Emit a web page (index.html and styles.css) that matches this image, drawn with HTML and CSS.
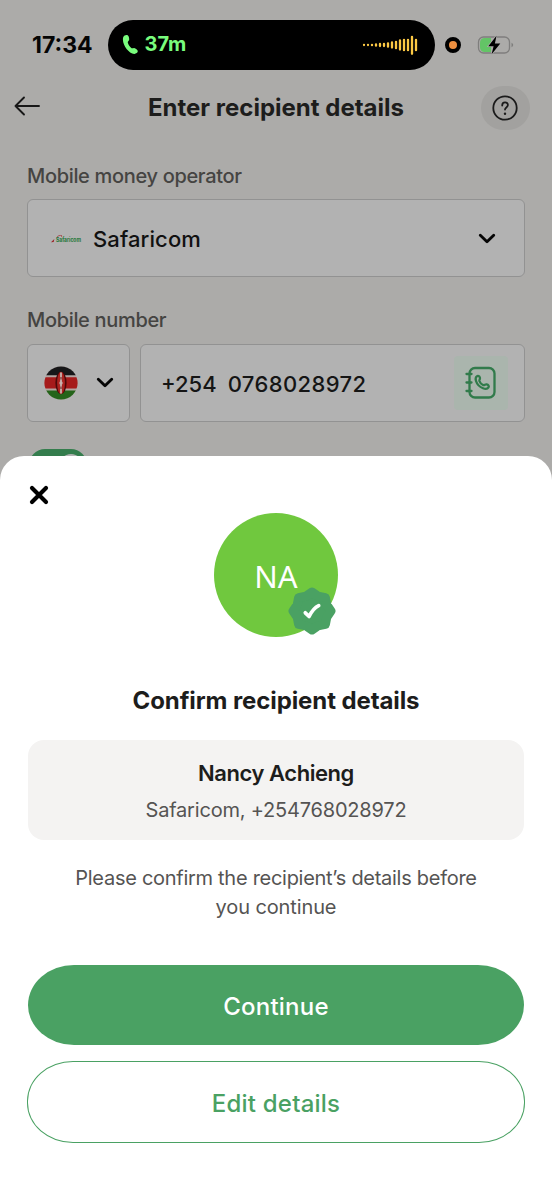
FILE: index.html
```html
<!DOCTYPE html>
<html lang="en">
<head>
<meta charset="utf-8">
<title>Enter recipient details</title>
<link rel="stylesheet" href="styles.css">
</head>
<body>
<div class="screen">
  <div class="status">
    <span class="clock">17:34</span>
    <div class="island">
      <svg class="call" width="17" height="21" viewBox="0 0 17 21"><path d="M1.2 3.2C2 1.300 4.300.4 5.700 1.300c1.300.9 1.800 3.600 1.300 4.900-.4 1-1.400 1.300-1.200 2.400.4 1.900 1.800 4.100 3.500 5.400 1 .7 1.700-.2 2.900-.1 1.400.2 3.600 1.800 3.600 3.200 0 1.700-1.900 2.900-3.600 2.800C6.300 19.400-.6 9.500 1.200 3.200z" fill="#79fc7d"/></svg>
      <span class="duration">37m</span>
      <svg class="wave" width="56" height="20" viewBox="0 0 56 20" stroke="#fbc844" stroke-width="2.300" stroke-linecap="round"><path d="M2 10h.01M6 10h.01M10 9.800v.4M14 9.300v1.400M18 9v2M22 9v2M26 8.300v3.400M30 7.500v5M34 6.800v6.400M38 5.500v9M42 4.800v10.400M46 4.800v10.400M50 1.800v17M54 4.800v10.400"/></svg>
    </div>
    <span class="mic"></span>
    <svg class="battery" width="37" height="20" viewBox="0 0 37 20"><path d="M7.500 3H14v14H7.500A4.500 4.500 0 0 1 3 12.500v-5A4.500 4.500 0 0 1 7.500 3z" fill="#63c466"/><rect x="1.500" y="2" width="31" height="16" rx="5" fill="none" stroke="#7f7e7d" stroke-width="1.300"/><path d="M34.500 7.800c2.200.8 2.200 3.600 0 4.400z" fill="#7f7e7d"/><path d="M19.500.8 11.300 11.300h5.300l-2 8L23.300 8.500h-5.400z" fill="#000" stroke="#acaba9" stroke-width="1.500" paint-order="stroke"/></svg>
  </div>
  <header class="bar">
    <svg class="back" width="26" height="20" viewBox="0 0 26 20"><path d="M25 10H1.500M10 1.500 1.500 10l8.500 8.500" fill="none" stroke="#171717" stroke-width="1.900" stroke-linecap="round" stroke-linejoin="round"/></svg>
    <h1 class="title">Enter recipient details</h1>
    <div class="help"><svg width="26" height="26" viewBox="0 0 26 26" fill="none" stroke="#1b1b1b" stroke-width="1.800" stroke-linecap="round"><circle cx="13" cy="13" r="11.700"/><path d="M10.200 10.500c0-4.200 5.700-4.200 5.700-.4 0 2.300-2.900 2.500-2.900 4.500"/><path d="M13 18.700h.01" stroke-width="2.400"/></svg></div>
  </header>
  <main class="form">
    <div class="label operator-label">Mobile money operator</div>
    <div class="field operator">
      <svg class="logo" width="33" height="16" viewBox="0 -3 33 16"><path d="M1 8.200 4.300 5l-.6 3z" fill="#9c2128"/><path d="M6.500 3.500C8 1.600 9.800 1 12 1.800l-1 .8" fill="none" stroke="#a53b3f" stroke-width=".8"/><text class="logo-text" x="6" y="7.500" textLength="25" lengthAdjust="spacingAndGlyphs">Safaricom</text></svg>
      <span class="operator-name">Safaricom</span>
      <svg class="chevron" width="18" height="12" viewBox="0 0 18 12"><path d="m2.300 2.300 6.700 6.400 6.700-6.400"/></svg>
    </div>
    <div class="label number-label">Mobile number</div>
    <div class="row">
      <div class="field country">
        <svg width="34" height="34" viewBox="0 0 34 34"><defs><clipPath id="disc"><circle cx="17" cy="17" r="16.600"/></clipPath></defs><g clip-path="url(#disc)"><path d="M0 0h34v34H0z" fill="#b3a5a2"/><path d="M0 0h34v9.300H0z" fill="#171719"/><path d="M0 11.200h34v11.400H0z" fill="#a61b1b"/><path d="M0 24.500h34V34H0z" fill="#24641a"/><ellipse cx="17" cy="17" rx="5.600" ry="11.300" fill="#4b0909"/><ellipse cx="17" cy="17" rx="3.900" ry="11.300" fill="#ac2320"/><path d="M17 6.500v21" stroke="#c7b4b0" stroke-width="1.800"/><path d="M17 11v2.500M17 20.500V23" stroke="#76312f" stroke-width="1.200"/><circle cx="17" cy="17" r="1.700" fill="#c7b4b0"/></g></svg>
        <svg class="chevron" width="18" height="12" viewBox="0 0 18 12"><path d="m2.300 2.300 6.700 6.400 6.700-6.400"/></svg>
      </div>
      <div class="field phone">
        <span class="prefix">+254</span><span class="digits">0768028972</span>
        <div class="contacts"><svg width="32" height="34" viewBox="0 0 32 34" fill="none" stroke="#317b4b" stroke-width="2.300" stroke-linecap="round" stroke-linejoin="round"><rect x="4.500" y="2" width="25" height="29.500" rx="5.500"/><path d="M1.500 8h5M1.500 16.500h5M1.500 25h5"/><path d="M11.800 10.300c1.200-.9 2.500-.2 3.100 1.400.5 1.500-.8 2.100-.5 3.300.6 1.900 2 3.400 3.900 4.100 1.200.4 1.900-1 3.300-.7 1.800.4 2.700 1.700 1.900 2.900-1 1.600-3.300 1.800-5.500.9-3.400-1.300-6-4.100-7-7.200-.6-2-.4-3.800.8-4.700z"/></svg></div>
      </div>
    </div>
    <div class="toggle"><span class="knob"></span></div>
  </main>

  <section class="sheet">
    <svg class="close" width="20" height="20" viewBox="0 0 20 20"><path d="m3 3 14 14M17 3 3 17" stroke="#000" stroke-width="4.200" stroke-linecap="round"/></svg>
    <div class="avatar"><span class="initials">NA</span>
      <svg class="verified" width="48" height="48" viewBox="-24 -24 48 48"><path fill="#4aa163" stroke="#4aa163" stroke-width="9" stroke-linejoin="round" d="M0-19 6.100-14.800 13.400-13.400 14.800-6.100 19 0 14.800 6.100 13.400 13.400 6.100 14.800 0 19-6.100 14.800-13.400 13.400-14.800 6.100-19 0-14.800-6.100-13.400-13.400-6.100-14.800z"/><path d="m-6.700 1.800 3.800 3.700C-.9 1.400 2-3.200 6.700-5.400" fill="none" stroke="#fff" stroke-width="3.700" stroke-linecap="round" stroke-linejoin="round"/></svg>
    </div>
    <h2 class="heading">Confirm recipient details</h2>
    <div class="card"><div class="name">Nancy Achieng</div><div class="account">Safaricom, +254768028972</div></div>
    <p class="note"><span class="line-one">Please confirm the recipient’s details before</span><br><span class="line-two">you continue</span></p>
    <button class="button primary"><span>Continue</span></button>
    <button class="button outline"><span>Edit details</span></button>
  </section>
</div>
</body>
</html>
```
FILE: styles.css
```css
* { box-sizing: border-box; }
body { margin: 0; font-family: Inter, "Liberation Sans", sans-serif; }
svg { display: block; flex: none; }
.screen { position: relative; width: 552px; height: 1200px; overflow: hidden; background: #acaba9; }
.screen span, .title, .heading, .label, .name, .account { white-space: nowrap; }

.status { display: flex; align-items: center; height: 89px; padding-left: 32px; }
.clock { width: 76px; font-size: 23px; font-weight: 700; color: #050505; }
.island { display: flex; align-items: center; width: 327px; height: 50px; padding: 0 17px 0 14px; border-radius: 25px; background: #000; }
.duration { margin-left: 5.500px; padding-bottom: 1px; font-size: 20px; font-weight: 700; color: #79fc7d; }
.wave { margin-left: auto; }
.mic { width: 16px; height: 16px; margin-left: 10px; border: 4px solid #000; border-radius: 50%; background: #ee8f40; }
.battery { margin-left: 16px; }

.bar { display: flex; align-items: center; height: 37px; padding: 0 22px 0 14px; }
.back { margin-bottom: 4px; }
.title { flex: 1; margin: 0 0 0 31px; text-align: center; font-size: 24px; line-height: 30px; font-weight: 700; color: #1d1d1c; }
.help { display: flex; align-items: center; justify-content: center; width: 49px; height: 44px; border-radius: 22px; background: #a2a19f; }
.help svg { margin-right: 1px; }

.form { padding: 35px 27px 0; }
.label { font-size: 20px; line-height: 28px; font-weight: 500; letter-spacing: -.33px; color: #454442; }
.field { display: flex; align-items: center; height: 78px; border: 1.500px solid #929292; border-radius: 6px; background: #b2b2b2; }
.operator { margin-top: 10px; padding: 1px 28px 0 22px; }
.operator-label { padding-top: 1px; margin-bottom: -1px; }
.logo-text { font-size: 5.500px; font-weight: 700; fill: #26783a; }
.operator-name { margin-left: 10px; padding-top: 1px; font-size: 22px; font-weight: 500; letter-spacing: .1px; color: #111; }
.chevron path { fill: none; stroke: #050505; stroke-width: 2.900; stroke-linecap: round; stroke-linejoin: round; }
.operator .chevron { margin-left: auto; }
.number-label { margin-top: 29px; }
.row { display: flex; gap: 10px; margin-top: 10px; }
.country { width: 103px; padding-left: 15.500px; gap: 18px; }
.phone { flex: 1; padding: 0 16px 0 20px; color: #151515; font-size: 22px; font-weight: 500; }
.prefix, .digits { padding-top: 2px; }
.digits { margin-left: 11px; letter-spacing: .4px; }
.contacts { display: flex; align-items: center; justify-content: center; width: 54px; height: 54px; margin-left: auto; border-radius: 4px; background: #aab5ad; }
.toggle { width: 58px; height: 32px; margin: 27px 0 0 2px; padding: 5px 4px 0 30px; border-radius: 16px; background: #347d4d; }
.knob { display: block; width: 24px; height: 24px; border-radius: 50%; background: #b2b2b2; }

.sheet { position: absolute; left: 0; right: 0; bottom: 0; height: 744px; padding: 29px 27px 0; display: flex; flex-direction: column; border-radius: 24px 24px 0 0; background: #fff; }
.close { margin-left: 2px; }
.avatar { position: relative; display: flex; align-items: center; justify-content: center; width: 124px; height: 124px; margin: 8px auto 0; border-radius: 50%; background: #70c83e; }
.initials { padding-top: 2px; font-family: "Noto Sans", sans-serif; font-size: 31px; line-height: 40px; color: #fff; }
.verified { position: absolute; right: 2px; bottom: 2px; }
.heading { margin: 47px 0 0; text-align: center; font-size: 24px; line-height: 34px; font-weight: 700; letter-spacing: -.1px; color: #1d1d1c; }
.card { height: 100px; margin: 22px 1px 0; padding-top: 17px; border-radius: 16px; background: #f4f3f2; text-align: center; }
.name { font-size: 22px; line-height: 32px; font-weight: 600; letter-spacing: -.45px; color: #1d1d1c; }
.account { margin-top: 7px; font-size: 20px; line-height: 28px; letter-spacing: -.2px; color: #555453; }
.note { margin: 23.500px 0 0; text-align: center; font-size: 20px; line-height: 29.500px; color: #555453; }
.line-one { letter-spacing: -.28px; }
.line-two { letter-spacing: -.12px; }
.button { height: 80px; flex: none; border-radius: 46px / 40px; font: 500 24px Inter, "Liberation Sans", sans-serif; letter-spacing: .22px; padding: 3px 0 0; }
.primary { margin: 42.500px 1px 0; border: 0; background: #4aa163; color: #fff; }
.outline { margin-top: 16px; height: 82px; border: 1.500px solid #4aa163; background: #fff; color: #4aa163; }
```
